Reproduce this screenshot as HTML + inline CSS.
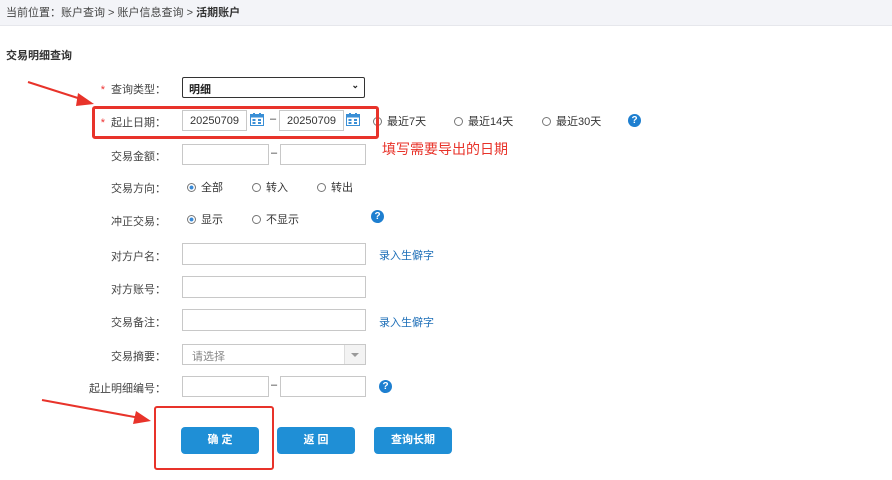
<!DOCTYPE html>
<html><head><meta charset="utf-8"><style>
body{margin:0;width:892px;height:480px;background:#fff;font-family:"Liberation Sans","Noto Sans CJK SC",sans-serif;font-size:11px;color:#333;position:relative;overflow:hidden}
.a{position:absolute}
.hdr{left:0;top:0;width:892px;height:25px;background:#f3f4f8;border-bottom:1px solid #e6e7ec}
.lbl{position:absolute;right:726px;text-align:right;white-space:nowrap;color:#444}
.star{color:#e33;margin-right:6px}
.in{position:absolute;border:1px solid #c8c8c8;background:#fff;height:19px;box-sizing:border-box}
.rad{display:inline-block;width:7px;height:7px;border:1px solid #777;border-radius:50%;margin-right:5px;vertical-align:-1px}
.on{background:radial-gradient(#3a8ad6 35%,#fff 45%)}
.q{position:absolute;width:13px;height:13px;border-radius:50%;background:#1e7fd0;color:#fff;font-size:10px;font-weight:bold;text-align:center;line-height:13px}
.btn{position:absolute;top:427px;height:27px;width:78px;background:#1f8fd6;border-radius:4px;color:#fff;font-weight:bold;text-align:center;line-height:27px;font-size:11px}
.link{position:absolute;color:#1e6fb8}
.cal{position:absolute;width:14px;height:13px}
</style></head><body>
<div class="a hdr"></div>
<div class="a" style="left:6px;top:4px;color:#444">当前位置：账户查询 &gt; 账户信息查询 &gt; <b style="color:#333">活期账户</b></div>
<div class="a" style="left:6px;top:47px;font-weight:bold">交易明细查询</div>

<div class="lbl" style="top:81px"><span class="star">*</span>查询类型：</div>
<div class="in" style="left:182px;top:77px;width:183px;height:21px;border:1px solid #333;border-radius:2px;padding:3px 6px;font-weight:bold;color:#222">明细<span style="position:absolute;right:5px;top:2px;font-size:9px">&#8964;</span></div>

<div class="lbl" style="top:114px"><span class="star">*</span>起止日期：</div>
<div class="in" style="left:182px;top:110px;width:65px;height:21px;padding:4px 7px">20250709</div>
<svg class="cal" style="left:250px;top:113px" viewBox="0 0 14 13"><rect x="0.5" y="1.5" width="13" height="11" fill="#fff" stroke="#3a8fd6"/><rect x="0.5" y="1.5" width="13" height="3" fill="#3a8fd6"/><rect x="3" y="0" width="2" height="3" fill="#3a8fd6"/><rect x="9" y="0" width="2" height="3" fill="#3a8fd6"/><rect x="2.5" y="6" width="3" height="2" fill="#3a8fd6"/><rect x="8" y="6" width="3" height="2" fill="#3a8fd6"/><rect x="2.5" y="9" width="3" height="2" fill="#3a8fd6"/><rect x="8" y="9" width="3" height="2" fill="#3a8fd6"/></svg>
<div class="a" style="left:270px;top:113px">–</div>
<div class="in" style="left:279px;top:110px;width:65px;height:21px;padding:4px 7px">20250709</div>
<svg class="cal" style="left:346px;top:113px" viewBox="0 0 14 13"><rect x="0.5" y="1.5" width="13" height="11" fill="#fff" stroke="#3a8fd6"/><rect x="0.5" y="1.5" width="13" height="3" fill="#3a8fd6"/><rect x="3" y="0" width="2" height="3" fill="#3a8fd6"/><rect x="9" y="0" width="2" height="3" fill="#3a8fd6"/><rect x="2.5" y="6" width="3" height="2" fill="#3a8fd6"/><rect x="8" y="6" width="3" height="2" fill="#3a8fd6"/><rect x="2.5" y="9" width="3" height="2" fill="#3a8fd6"/><rect x="8" y="9" width="3" height="2" fill="#3a8fd6"/></svg>
<div class="a" style="left:373px;top:113px"><span class="rad"></span>最近7天</div>
<div class="a" style="left:454px;top:113px"><span class="rad"></span>最近14天</div>
<div class="a" style="left:542px;top:113px"><span class="rad"></span>最近30天</div>
<div class="q" style="left:628px;top:114px">?</div>
<div class="a" style="left:92px;top:106px;width:281px;height:27px;border:3px solid #e8332a;border-radius:3px"></div>
<div class="a" style="left:382px;top:139px;color:#e8332a;font-size:14px">填写需要导出的日期</div>

<div class="lbl" style="top:148px">交易金额：</div>
<div class="in" style="left:182px;top:144px;width:87px;height:21px"></div>
<div class="a" style="left:271px;top:147px">–</div>
<div class="in" style="left:280px;top:144px;width:86px;height:21px"></div>

<div class="lbl" style="top:180px">交易方向：</div>
<div class="a" style="left:187px;top:179px"><span class="rad on"></span>全部</div>
<div class="a" style="left:252px;top:179px"><span class="rad"></span>转入</div>
<div class="a" style="left:317px;top:179px"><span class="rad"></span>转出</div>

<div class="lbl" style="top:213px">冲正交易：</div>
<div class="a" style="left:187px;top:211px"><span class="rad on"></span>显示</div>
<div class="a" style="left:252px;top:211px"><span class="rad"></span>不显示</div>
<div class="q" style="left:371px;top:210px">?</div>

<div class="lbl" style="top:248px">对方户名：</div>
<div class="in" style="left:182px;top:243px;width:184px;height:22px"></div>
<div class="link" style="left:379px;top:247px">录入生僻字</div>

<div class="lbl" style="top:281px">对方账号：</div>
<div class="in" style="left:182px;top:276px;width:184px;height:22px"></div>

<div class="lbl" style="top:314px">交易备注：</div>
<div class="in" style="left:182px;top:309px;width:184px;height:22px"></div>
<div class="link" style="left:379px;top:314px">录入生僻字</div>

<div class="lbl" style="top:348px">交易摘要：</div>
<div class="in" style="left:182px;top:344px;width:184px;height:21px;padding:3px 9px;color:#888">请选择<span style="position:absolute;right:0;top:0;width:20px;height:19px;border-left:1px solid #ddd;background:#f3f3f3"><span style="position:absolute;left:6px;top:8px;border:4px solid transparent;border-top:4px solid #999"></span></span></div>

<div class="lbl" style="top:380px">起止明细编号：</div>
<div class="in" style="left:182px;top:376px;width:87px;height:21px"></div>
<div class="a" style="left:271px;top:379px">–</div>
<div class="in" style="left:280px;top:376px;width:86px;height:21px"></div>
<div class="q" style="left:379px;top:380px">?</div>

<div class="a" style="left:154px;top:406px;width:116px;height:60px;border:2px solid #e8332a;border-radius:3px"></div>
<div class="btn" style="left:181px">确 定</div>
<div class="btn" style="left:277px">返 回</div>
<div class="btn" style="left:374px">查询长期</div>

<svg class="a" style="left:0;top:0" width="892" height="480">
<line x1="28" y1="82" x2="84" y2="100" stroke="#e8332a" stroke-width="2"/>
<polygon points="94,104 78,93 76,106" fill="#e8332a"/>
<line x1="42" y1="400" x2="140" y2="418" stroke="#e8332a" stroke-width="2"/>
<polygon points="151,421 136,411 133,424" fill="#e8332a"/>
</svg>
</body></html>
